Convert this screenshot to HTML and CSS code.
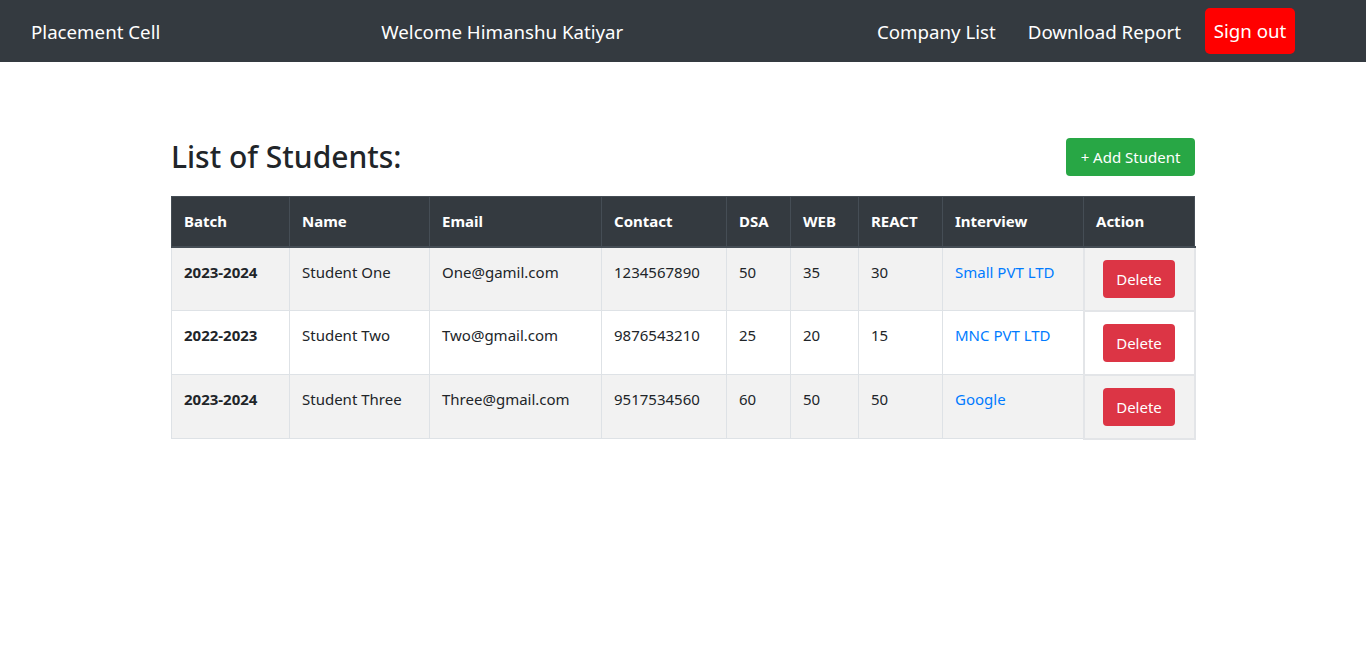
FILE: index.html
```html
<!DOCTYPE html>
<html>
<head>
<meta charset="utf-8">
<link rel="stylesheet" href="styles.css">
</head>
<body>
<nav class="navbar">
  <a class="brand" href="#">Placement Cell</a>
  <span class="welcome">Welcome Himanshu Katiyar</span>
  <div class="nav-right">
    <a class="nav-link" href="#">Company List</a>
    <a class="nav-link" href="#">Download Report</a>
    <a class="btn-signout" href="#">Sign out</a>
  </div>
</nav>
<main class="content">
  <div class="title-row">
    <h2 class="title">List of Students:</h2>
    <a class="btn-add" href="#">+ Add Student</a>
  </div>
  <table class="students">
    <thead>
      <tr>
        <th class="c-batch">Batch</th>
        <th class="c-name">Name</th>
        <th class="c-email">Email</th>
        <th class="c-contact">Contact</th>
        <th class="c-dsa">DSA</th>
        <th class="c-web">WEB</th>
        <th class="c-react">REACT</th>
        <th class="c-interview">Interview</th>
        <th class="c-action">Action</th>
      </tr>
    </thead>
    <tbody>
      <tr class="odd">
        <td class="bold">2023-2024</td>
        <td>Student One</td>
        <td>One@gamil.com</td>
        <td>1234567890</td>
        <td>50</td>
        <td>35</td>
        <td>30</td>
        <td><a class="link" href="#">Small PVT LTD</a></td>
        <td class="action"><a class="btn-delete" href="#">Delete</a></td>
      </tr>
      <tr>
        <td class="bold">2022-2023</td>
        <td>Student Two</td>
        <td>Two@gmail.com</td>
        <td>9876543210</td>
        <td>25</td>
        <td>20</td>
        <td>15</td>
        <td><a class="link" href="#">MNC PVT LTD</a></td>
        <td class="action"><a class="btn-delete" href="#">Delete</a></td>
      </tr>
      <tr class="odd">
        <td class="bold">2023-2024</td>
        <td>Student Three</td>
        <td>Three@gmail.com</td>
        <td>9517534560</td>
        <td>60</td>
        <td>50</td>
        <td>50</td>
        <td><a class="link" href="#">Google</a></td>
        <td class="action"><a class="btn-delete" href="#">Delete</a></td>
      </tr>
    </tbody>
  </table>
</main>
</body>
</html>
```
FILE: styles.css
```css
* { box-sizing: border-box; }
html, body { margin: 0; padding: 0; }
body {
  font-family: "Noto Sans", "Open Sans", sans-serif;
  font-size: 15px;
  line-height: 24px;
  color: #212529;
  background: #fff;
}
a { text-decoration: none; }

.navbar {
  height: 62px;
  background: #343a40;
  display: flex;
  align-items: center;
  padding: 2px 71px 0 31px;
  font-size: 18.7px;
  line-height: 30px;
  color: #fff;
}
.brand { color: #fff; }
.welcome { margin-left: 221px; color: #fff; }
.nav-right {
  margin-left: auto;
  display: flex;
  align-items: center;
}
.nav-link { color: #fff; margin-right: 32px; }
.nav-link + .nav-link { margin-right: 24px; }
.btn-signout {
  display: inline-block;
  background: #ff0000;
  color: #fff;
  border-radius: 5px;
  width: 90px;
  height: 46px;
  line-height: 46px;
  text-align: center;
  margin-top: -2px;
}

.content {
  width: 1024px;
  margin: 0 auto;
  padding-top: 76px;
}
.title-row {
  display: flex;
  justify-content: space-between;
  align-items: flex-start;
  height: 58px;
}
.title {
  margin: 0;
  padding-top: 1px;
  font-size: 30px;
  font-weight: 500;
  line-height: 36px;
}
.btn-add {
  display: inline-block;
  background: #28a745;
  color: #fff;
  border-radius: 4px;
  width: 129px;
  height: 38px;
  line-height: 38px;
  text-align: center;
}

.students {
  width: 1024px;
  border-collapse: collapse;
  table-layout: fixed;
}
.students th, .students td {
  padding: 12px 12px;
  text-align: left;
  vertical-align: top;
  border: 1px solid #dee2e6;
}
.students th {
  background: #343a40;
  color: #fff;
  font-weight: 700;
  border-color: #454d55;
  border-bottom: 2px solid #454d55;
  height: 50px;
}
.students td { height: 64px; }
.students tr.odd td { background: #f2f2f2; }
.students td.bold { font-weight: 700; }
.students td.action {
  text-align: center;
  border: 2px solid #e3e5e8;
  padding-top: 12px;
}
.c-batch { width: 118px; }
.c-name { width: 140px; }
.c-email { width: 172px; }
.c-contact { width: 125px; }
.c-dsa { width: 64px; }
.c-web { width: 68px; }
.c-react { width: 84px; }
.c-interview { width: 141px; }
.c-action { width: 111px; }

.link { color: #007bff; }
.btn-delete {
  display: inline-block;
  background: #dc3545;
  color: #fff;
  border-radius: 4px;
  width: 72px;
  height: 38px;
  line-height: 38px;
  text-align: center;
}
```
